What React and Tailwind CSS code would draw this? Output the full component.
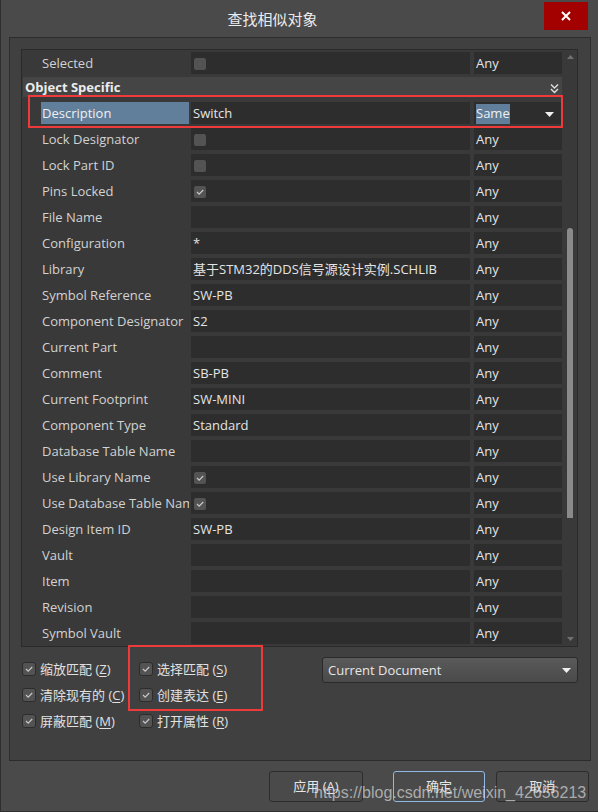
import React from 'react';

const Check = () => (
  <svg width="10" height="10" viewBox="0 0 10 10">
    <path d="M2 5 L4.2 7.2 L8.2 3" stroke="#c8c8c8" strokeWidth="1.2" fill="none" />
  </svg>
);

const Box = ({ checked }) => (
  <div className="w-[14px] h-[14px] rounded-[3px] bg-[#535353] border border-[#2c2c2c] flex items-center justify-center shrink-0">
    {checked ? <Check /> : null}
  </div>
);

const rows = [
  { l: 'Lock Designator', cb: false },
  { l: 'Lock Part ID', cb: false },
  { l: 'Pins Locked', cb: true },
  { l: 'File Name', v: '' },
  { l: 'Configuration', v: '*' },
  { l: 'Library', v: '基于STM32的DDS信号源设计实例.SCHLIB' },
  { l: 'Symbol Reference', v: 'SW-PB' },
  { l: 'Component Designator', v: 'S2' },
  { l: 'Current Part', v: '' },
  { l: 'Comment', v: 'SB-PB' },
  { l: 'Current Footprint', v: 'SW-MINI' },
  { l: 'Component Type', v: 'Standard' },
  { l: 'Database Table Name', v: '' },
  { l: 'Use Library Name', cb: true },
  { l: 'Use Database Table Name', cb: true },
  { l: 'Design Item ID', v: 'SW-PB' },
  { l: 'Vault', v: '' },
  { l: 'Item', v: '' },
  { l: 'Revision', v: '' },
  { l: 'Symbol Vault', v: '' },
];

const Row = ({ label, children, match = 'Any', hl = false }) => (
  <div className="h-[26px] flex items-start pt-[2px] shrink-0">
    <div className="w-[169px] h-[22px] pl-[19px] overflow-hidden shrink-0">
      <div className={`w-[148px] h-[22px] pl-[1px] pt-[2px] flex items-center whitespace-nowrap overflow-hidden text-[#d2d2d2] ${hl ? 'bg-[#617e9b] text-[#f0f0f0]' : ''}`}>
        {label}
      </div>
    </div>
    <div className="w-[279px] h-[22px] bg-[#2d2d2d] pl-[2px] pt-[2px] flex items-center whitespace-nowrap overflow-hidden text-[#e4e4e4] shrink-0">
      {children}
    </div>
    <div className="w-[88px] h-[22px] ml-[4px] bg-[#2d2d2d] pl-[2px] pt-[2px] flex items-center text-[#e4e4e4] shrink-0">
      {match}
    </div>
  </div>
);

const U = ({ c }) => <span className="underline underline-offset-2">{c}</span>;

const CbItem = ({ children }) => (
  <div className="h-[26px] flex items-center gap-[4px] whitespace-nowrap text-[#e0e0e0]">
    <Box checked />
    <span className="pt-[2px]">{children}</span>
  </div>
);

export default function App() {
  return (
    <div className="relative w-[598px] h-[812px] bg-[#4a4a4a] overflow-hidden border-l border-b border-[#2e2e2e] font-['Open_Sans','Noto_Sans_CJK_SC',sans-serif] text-[13px]">
      {/* Title bar */}
      <div className="h-[37px] flex items-start">
        <div className="flex-1 h-[37px] flex items-center justify-center text-[15px] text-[#ececec] font-['Noto_Sans_CJK_SC',sans-serif] pt-[1px]">
          查找相似对象
        </div>
        <div className="w-[44px] h-[28px] mt-[2px] mr-[10px] bg-[#a30000] flex items-center justify-center">
          <svg width="10" height="10" viewBox="0 0 10 10">
            <path d="M1 1 L9 9 M9 1 L1 9" stroke="#ffffff" strokeWidth="2" />
          </svg>
        </div>
      </div>

      {/* Outer panel */}
      <div className="ml-[8px] w-[582px] h-[724px] border border-[#2c2c2c] bg-[#404040] pt-[11px] pl-[11px]">
        {/* Grid */}
        <div className="w-[557px] h-[598px] border border-[#2a2a2a] bg-[#393939] flex">
          <div className="w-[540px] flex flex-col">
            <Row label="Selected">
              <Box checked={false} />
            </Row>
            <div className="h-[24px] pt-[1px] pl-[1px] shrink-0">
              <div className="w-[539px] h-[20px] bg-[#454545] flex items-center justify-between pl-[2px] pr-[3px] pt-[2px]">
                <span className="font-bold text-[#ececec]">Object Specific</span>
                <svg width="9" height="11" viewBox="0 0 9 11">
                  <path d="M1 1.5 L4.5 5 L8 1.5 M1 6 L4.5 9.5 L8 6" stroke="#e0e0e0" strokeWidth="1.4" fill="none" />
                </svg>
              </div>
            </div>
            <Row
              label="Description"
              hl
              match={
                <div className="w-full flex items-center justify-between pr-[8px]">
                  <span className="bg-[#617e9b] text-[#f0f0f0]">Same</span>
                  <svg width="9" height="5" viewBox="0 0 9 5">
                    <path d="M0 0 L9 0 L4.5 5 Z" fill="#f0f0f0" />
                  </svg>
                </div>
              }
            >
              Switch
            </Row>
            {rows.map((r) => (
              <Row key={r.l} label={r.l}>
                {r.cb !== undefined ? <Box checked={r.cb} /> : r.v}
              </Row>
            ))}
          </div>
          {/* Scrollbar */}
          <div className="w-[15px] flex flex-col items-center">
            <svg className="mt-[5px] ml-[1px]" width="7" height="4" viewBox="0 0 7 4">
              <path d="M0 4 L7 4 L3.5 0 Z" fill="#707070" />
            </svg>
            <div className="mt-[169px] ml-[1px] w-[6px] h-[290px] bg-[#8a8a8a] rounded-t-[3px]" />
            <svg className="mt-auto mb-[5px] ml-[1px]" width="7" height="4" viewBox="0 0 7 4">
              <path d="M0 0 L7 0 L3.5 4 Z" fill="#707070" />
            </svg>
          </div>
        </div>

        {/* Bottom options */}
        <div className="mt-[9px] flex items-start">
          <div className="ml-[1px] w-[106px] overflow-hidden">
            <CbItem>缩放匹配 (<U c="Z" />)</CbItem>
            <CbItem>清除现有的 (<U c="C" />)</CbItem>
            <CbItem>屏蔽匹配 (<U c="M" />)</CbItem>
          </div>
          <div className="ml-[11px] w-[170px]">
            <CbItem>选择匹配 (<U c="S" />)</CbItem>
            <CbItem>创建表达 (<U c="E" />)</CbItem>
            <CbItem>打开属性 (<U c="R" />)</CbItem>
          </div>
          <div className="ml-[13px] mt-[1px] w-[256px] h-[26px] rounded-[3px] border border-[#2a2a2a] bg-gradient-to-b from-[#5a5a5a] to-[#4a4a4a] flex items-center justify-between pl-[5px] pr-[6px] text-[#e6e6e6]">
            <span className="pt-[1px]">Current Document</span>
            <svg width="9" height="5" viewBox="0 0 9 5">
              <path d="M0 0 L9 0 L4.5 5 Z" fill="#f0f0f0" />
            </svg>
          </div>
        </div>
      </div>

      {/* Buttons */}
      <div className="mt-[10px] flex justify-end pr-[9px] text-[#e6e6e6]">
        <div className="w-[94px] h-[31px] pt-[1px] rounded-[3px] border border-[#2c2c2c] bg-[#4a4a4a] flex items-center justify-center">
          应用 (<U c="A" />)
        </div>
        <div className="ml-[30px] w-[92px] h-[31px] pt-[1px] rounded-[3px] border border-[#8fb8e4] bg-[#4a4a4a] flex items-center justify-center">
          确定
        </div>
        <div className="ml-[11px] w-[93px] h-[31px] pt-[1px] rounded-[3px] border border-[#2c2c2c] bg-[#4a4a4a] flex items-center justify-center">
          取消
        </div>
      </div>

      {/* Annotations */}
      <div className="absolute left-[27px] top-[95px] w-[535px] h-[33px] border-2 border-[#ee3a3a] pointer-events-none" />
      <div className="absolute left-[127px] top-[645px] w-[135px] h-[66px] border-2 border-[#ee3a3a] pointer-events-none" />
      <div className="absolute left-[313px] top-[783px] text-[16px] leading-[20px] text-[#d8d8d8]/70 font-['Liberation_Sans',sans-serif] whitespace-nowrap pointer-events-none">
        https://blog.csdn.net/weixin_42656213
      </div>
    </div>
  );
}
